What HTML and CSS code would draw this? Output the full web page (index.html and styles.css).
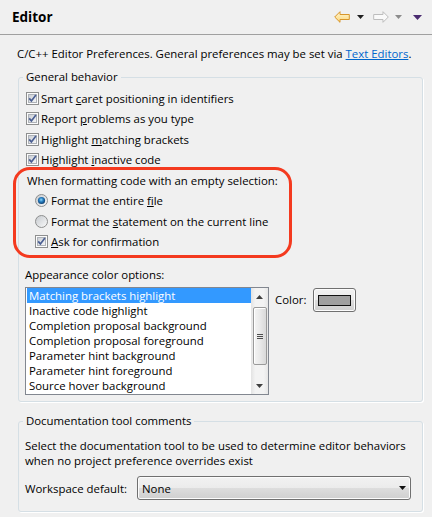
FILE: index.html
```html
<!DOCTYPE html>
<html lang="en">
<head>
<meta charset="utf-8">
<title>Editor</title>
<link rel="stylesheet" href="styles.css">
</head>
<body>
<svg class="svg-defs" aria-hidden="true">
  <defs>
    <linearGradient id="cbfill" x1="0" y1="0" x2="1" y2="1">
      <stop offset="0" stop-color="#c9cdd3"/>
      <stop offset="1" stop-color="#f6f7f8"/>
    </linearGradient>
    <linearGradient id="rbfill" x1="0" y1="0" x2="1" y2="1">
      <stop offset="0" stop-color="#c4c8cd"/>
      <stop offset="1" stop-color="#fbfbfb"/>
    </linearGradient>
    <radialGradient id="rbdot" cx="0.45" cy="0.4" r="0.6">
      <stop offset="0" stop-color="#8fd8fa"/>
      <stop offset="0.45" stop-color="#2b82c4"/>
      <stop offset="1" stop-color="#0b3c6e"/>
    </radialGradient>
    <linearGradient id="yellow" x1="0" y1="0" x2="0" y2="1">
      <stop offset="0" stop-color="#fff6d2"/>
      <stop offset="1" stop-color="#fcd77a"/>
    </linearGradient>
  </defs>
</svg>
<div class="page">
  <header class="header">
    <h1 class="title">Editor</h1>
    <div class="nav">
      <svg class="nav-arrow" width="16" height="12" viewBox="0 0 16 12"><polygon points="0.7,6 6,0.7 6,3.5 15.3,3.5 15.3,8.5 6,8.5 6,11.3" fill="url(#yellow)" stroke="#d8962b" stroke-linejoin="round"/></svg>
      <svg class="nav-drop" width="7" height="4" viewBox="0 0 7 4"><polygon points="0,0 7,0 3.5,4" fill="#1f1f1f"/></svg>
      <svg class="nav-arrow fwd" width="16" height="12" viewBox="0 0 16 12"><polygon points="15.3,6 10,0.7 10,3.5 0.7,3.5 0.7,8.5 10,8.5 10,11.3" fill="#fafafa" stroke="#bdbdbd" stroke-linejoin="round"/></svg>
      <svg class="nav-drop dim" width="7" height="4" viewBox="0 0 7 4"><polygon points="0,0 7,0 3.5,4" fill="#8c8c8c"/></svg>
      <svg class="nav-menu" width="9" height="5" viewBox="0 0 9 5"><polygon points="0,0 9,0 4.5,5" fill="#4a2b70"/></svg>
    </div>
  </header>

  <main class="content">
    <p class="desc">C/C++ Editor Preferences. General preferences may be set via <a class="link" href="#">Text Editors</a>.</p>

    <fieldset class="group general">
      <legend>General behavior</legend>

      <div class="row"><svg class="cb" width="13" height="13" viewBox="0 0 13 13"><rect x=".5" y=".5" width="12" height="12" fill="#fcfcfc" stroke="#8e8f8f"/><rect x="2.5" y="2.5" width="8" height="8" fill="url(#cbfill)" stroke="#aeb2b8"/><path d="M3.2 6.4 5.4 8.9 9.9 3" fill="none" stroke="#4a5e92" stroke-width="1.7"/></svg><span>Smart <u>c</u>aret positioning in identifiers</span></div>
      <div class="row"><svg class="cb" width="13" height="13" viewBox="0 0 13 13"><rect x=".5" y=".5" width="12" height="12" fill="#fcfcfc" stroke="#8e8f8f"/><rect x="2.5" y="2.5" width="8" height="8" fill="url(#cbfill)" stroke="#aeb2b8"/><path d="M3.2 6.4 5.4 8.9 9.9 3" fill="none" stroke="#4a5e92" stroke-width="1.7"/></svg><span>Report <u>p</u>roblems as you type</span></div>
      <div class="row"><svg class="cb" width="13" height="13" viewBox="0 0 13 13"><rect x=".5" y=".5" width="12" height="12" fill="#fcfcfc" stroke="#8e8f8f"/><rect x="2.5" y="2.5" width="8" height="8" fill="url(#cbfill)" stroke="#aeb2b8"/><path d="M3.2 6.4 5.4 8.9 9.9 3" fill="none" stroke="#4a5e92" stroke-width="1.7"/></svg><span>Highlight <u>m</u>atching brackets</span></div>
      <div class="row"><svg class="cb" width="13" height="13" viewBox="0 0 13 13"><rect x=".5" y=".5" width="12" height="12" fill="#fcfcfc" stroke="#8e8f8f"/><rect x="2.5" y="2.5" width="8" height="8" fill="url(#cbfill)" stroke="#aeb2b8"/><path d="M3.2 6.4 5.4 8.9 9.9 3" fill="none" stroke="#4a5e92" stroke-width="1.7"/></svg><span>Highlight <u>i</u>nactive code</span></div>

      <div class="format-block">
        <div class="row when">When formatting code with an empty selection:</div>
        <div class="row sub"><svg class="rb" width="13" height="13" viewBox="0 0 13 13"><circle cx="6.5" cy="6.5" r="6" fill="url(#rbfill)" stroke="#8e8f8f"/><circle cx="6.5" cy="6.5" r="3.6" fill="url(#rbdot)"/></svg><span>Format the entire <u>f</u>ile</span></div>
        <div class="row sub"><svg class="rb" width="13" height="13" viewBox="0 0 13 13"><circle cx="6.5" cy="6.5" r="6" fill="url(#rbfill)" stroke="#8e8f8f"/></svg><span>Format the <u>s</u>tatement on the current line</span></div>
        <div class="row sub"><svg class="cb" width="13" height="13" viewBox="0 0 13 13"><rect x=".5" y=".5" width="12" height="12" fill="#fcfcfc" stroke="#8e8f8f"/><rect x="2.5" y="2.5" width="8" height="8" fill="url(#cbfill)" stroke="#aeb2b8"/><path d="M3.2 6.4 5.4 8.9 9.9 3" fill="none" stroke="#4a5e92" stroke-width="1.7"/></svg><span><u>A</u>sk for confirmation</span></div>
        <div class="annotation"></div>
      </div>

      <div class="appearance">
        <div class="app-title">Appearance color options:</div>
        <div class="app-body">
          <div class="listbox">
            <ul class="items">
              <li class="selected">Matching brackets highlight</li>
              <li>Inactive code highlight</li>
              <li>Completion proposal background</li>
              <li>Completion proposal foreground</li>
              <li>Parameter hint background</li>
              <li>Parameter hint foreground</li>
              <li>Source hover background</li>
            </ul>
            <div class="scrollbar">
              <div class="sb-btn"><svg width="7" height="4" viewBox="0 0 7 4"><polygon points="3.5,0 7,4 0,4" fill="#404040"/></svg></div>
              <div class="sb-track">
                <div class="sb-thumb"><span class="grip"></span></div>
              </div>
              <div class="sb-btn"><svg width="7" height="4" viewBox="0 0 7 4"><polygon points="0,0 7,0 3.5,4" fill="#404040"/></svg></div>
            </div>
          </div>
          <div class="color-label">Color:</div>
          <button class="color-btn" type="button"><span class="swatch"></span></button>
        </div>
      </div>
    </fieldset>

    <fieldset class="group doc">
      <legend>Documentation tool comments</legend>
      <p class="doc-text">Select the documentation tool to be used to determine editor behaviors<br>when no project preference overrides exist</p>
      <div class="ws-row">
        <span class="ws-label">Workspace default:</span>
        <div class="combo"><span>None</span><svg width="7" height="4" viewBox="0 0 7 4"><polygon points="0,0 7,0 3.5,4" fill="#111"/></svg></div>
      </div>
    </fieldset>
  </main>
</div>
</body>
</html>
```

FILE: styles.css
```css
* { box-sizing: border-box; }
html, body { margin: 0; padding: 0; }
body {
  background: #f0f0f0;
  font-family: "Open Sans", "Noto Sans", sans-serif;
  font-size: 11.4px;
  color: #000;
  width: 432px;
  height: 517px;
  overflow: hidden;
}
.svg-defs { position: absolute; width: 0; height: 0; overflow: hidden; }

.header {
  height: 35px;
  border-bottom: 1px solid #a0a0a0;
  display: flex;
  align-items: center;
  justify-content: space-between;
  padding: 0 10px 0 12px;
}
.title { margin: 0; font-size: 13.5px; font-weight: 700; line-height: 18px; }
.nav { display: flex; align-items: center; }
.nav svg { display: block; }
.nav-drop { margin-left: 7px; }
.nav-arrow.fwd { margin-left: 9px; }
.nav-drop.dim { margin-left: 6px; }
.nav-menu { margin-left: 11px; }

.content { padding: 0 9px 0 18px; }
.desc { margin: 11px 0 0 -1px; line-height: 15px; }
.link { color: #0066cc; text-decoration: underline; }

.group {
  margin: 8px 0 0;
  padding: 3px 8px 6px 7px;
  border: 1px solid #d5dfe5;
  border-radius: 3px;
  min-width: 0;
  box-shadow: 1px 1px 0 #fff;
}
.group legend {
  margin-left: -3px;
  padding: 0 3px;
  line-height: 16px;
  height: 16px;
}

.row { display: flex; align-items: center; height: 20.5px; white-space: nowrap; }
.row svg { display: block; flex: none; }
.cb { margin-right: 2px; }
.rb { margin-right: 3px; }
.sub .cb { margin-right: 3px; }
.when { padding-left: 1px; }
.sub { padding-left: 9px; }

.format-block { position: relative; }
.annotation {
  position: absolute;
  top: -3px;
  left: -13px;
  width: 279px;
  height: 91px;
  border: 3.5px solid #f43a1f;
  border-radius: 17px;
  pointer-events: none;
}

.appearance { margin-top: 15px; }
.app-title { line-height: 16px; margin-left: -1px; }
.app-body { display: flex; align-items: flex-start; margin: 4px 0 0 -1px; }

.listbox {
  width: 244px;
  height: 108px;
  border: 1px solid #828790;
  background: #fff;
  display: flex;
}
.items { list-style: none; margin: 0; padding: 0 0 0 1px; flex: 1; min-width: 0; }
.items li { height: 15px; line-height: 15px; padding-left: 2px; white-space: nowrap; }
.items li.selected { background: #3399ff; color: #fff; }

.scrollbar {
  width: 17px;
  display: flex;
  flex-direction: column;
  background: linear-gradient(to right, #e3e3e3, #f3f3f3 25%, #f3f3f3 75%, #e6e6e6);
}
.sb-btn { height: 17px; display: flex; align-items: center; justify-content: center; }
.sb-btn svg { display: block; }
.sb-track { flex: 1; padding: 2px 1px 0 2px; }
.sb-thumb {
  height: 58px;
  border: 1px solid #9a9a9a;
  border-radius: 2px;
  background: linear-gradient(to right, #f4f4f4, #e9e9e9 50%, #d9d9d9);
  box-shadow: inset 1px 1px 0 #fff;
  display: flex;
  align-items: center;
  justify-content: center;
}
.grip {
  display: block;
  width: 6px;
  height: 5px;
  background: repeating-linear-gradient(to bottom, #4d4d4d 0 1px, transparent 1px 2px);
}

.color-label { width: 38px; margin: 5px 0 0 6px; line-height: 16px; padding-left: 0; }
.color-btn {
  margin: 1px 0 0;
  width: 43px;
  height: 24px;
  padding: 0;
  border: 1px solid #707070;
  border-radius: 3px;
  background: linear-gradient(to bottom, #f2f2f2 0%, #ebebeb 50%, #dddddd 51%, #cfcfcf 100%);
  box-shadow: inset 0 0 0 1px #fcfcfc;
  display: flex;
  align-items: center;
  justify-content: center;
}
.swatch { display: block; width: 33px; height: 11px; border: 1px solid #111; background: #a0a0a0; }

.doc { margin-top: 11px; padding-bottom: 11px; }
.doc-text { margin: 5.5px 0 0 -1px; line-height: 15px; }
.ws-row { display: flex; align-items: center; margin: 8.5px 0 0 -1px; }
.ws-label { width: 112px; flex: none; white-space: nowrap; }
.combo {
  width: 274px;
  height: 24px;
  border: 1px solid #707070;
  border-radius: 3px;
  background: linear-gradient(to bottom, #f2f2f2 0%, #ebebeb 50%, #dddddd 51%, #cfcfcf 100%);
  box-shadow: inset 0 0 0 1px #fcfcfc;
  display: flex;
  align-items: center;
  justify-content: space-between;
  padding: 0 4px 0 4px;
}
.combo svg { display: block; }
```
